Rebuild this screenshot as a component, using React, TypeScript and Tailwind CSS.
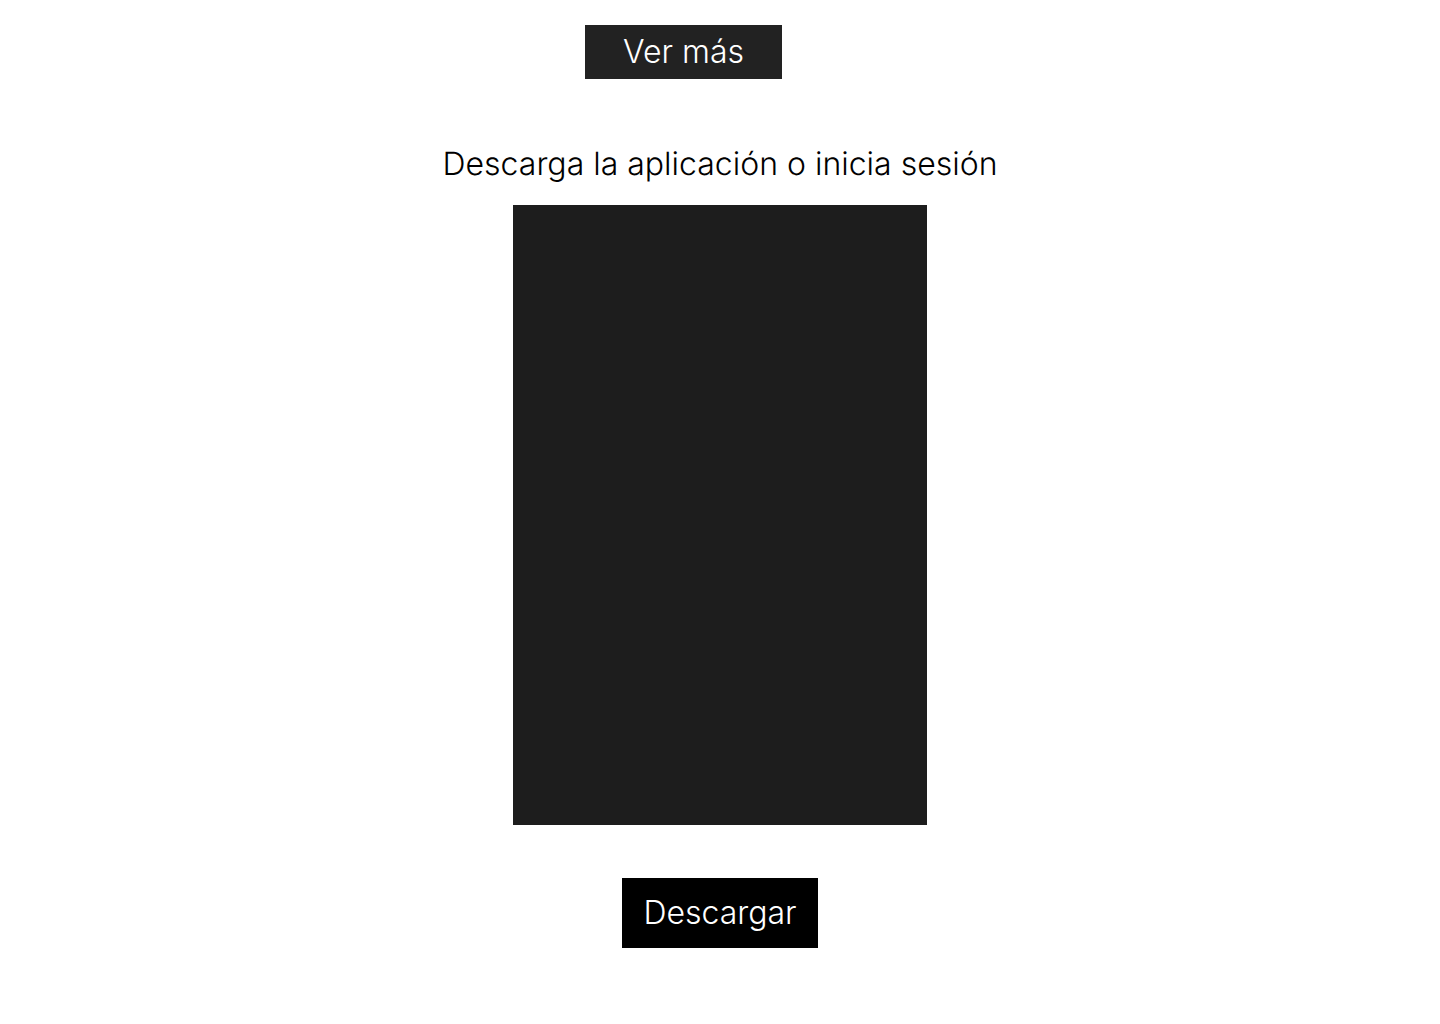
export default function App() {
  return (
    <main className="flex min-h-screen flex-col items-center bg-white pt-[25px] pb-[76px] font-['Inter',sans-serif] text-[32px] leading-[39px] font-light text-black [text-rendering:geometricPrecision]">
      <div className="flex w-full justify-center pr-[73px]">
        <button type="button" className="h-[54px] w-[197px] bg-[#222222] pb-0.5 text-white">
          Ver más
        </button>
      </div>
      <section className="mt-[65px] flex flex-col items-center">
        <h1 className="text-center font-light">Descarga la aplicación o inicia sesión</h1>
        <div className="mt-[22px] h-[620px] w-[414px] bg-[#1d1d1d]" />
        <button type="button" className="mt-[53px] h-[70px] w-[196px] bg-black pb-0.5 text-white">
          Descargar
        </button>
      </section>
    </main>
  );
}
